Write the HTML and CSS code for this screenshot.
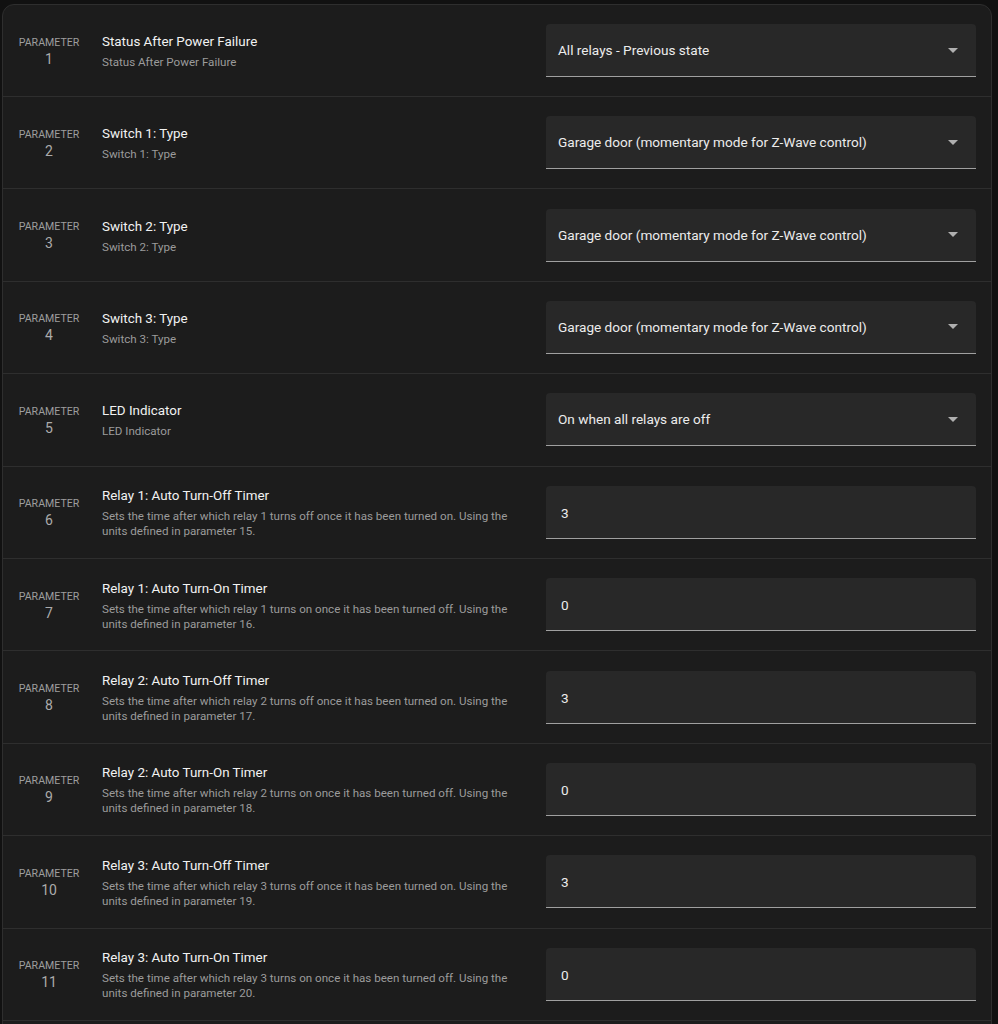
FILE: index.html
```html
<!DOCTYPE html>
<html lang="en">
<head>
    <meta charset="UTF-8">
    <title>Z-Wave Device Configuration</title>
    <link rel="stylesheet" href="styles.css">
</head>
<body>
    <div class="card">
        <div class="param-row">
            <div class="param-id"><span class="param-label">Parameter</span><span class="param-num">1</span></div>
            <div class="param-text">
                <div class="param-title">Status After Power Failure</div>
                <div class="param-desc">Status After Power Failure</div>
            </div>
            <div class="field select"><span>All relays - Previous state</span><i class="arrow"></i></div>
        </div>
        <div class="param-row">
            <div class="param-id"><span class="param-label">Parameter</span><span class="param-num">2</span></div>
            <div class="param-text">
                <div class="param-title">Switch 1: Type</div>
                <div class="param-desc">Switch 1: Type</div>
            </div>
            <div class="field select"><span>Garage door (momentary mode for Z-Wave control)</span><i class="arrow"></i></div>
        </div>
        <div class="param-row">
            <div class="param-id"><span class="param-label">Parameter</span><span class="param-num">3</span></div>
            <div class="param-text">
                <div class="param-title">Switch 2: Type</div>
                <div class="param-desc">Switch 2: Type</div>
            </div>
            <div class="field select"><span>Garage door (momentary mode for Z-Wave control)</span><i class="arrow"></i></div>
        </div>
        <div class="param-row">
            <div class="param-id"><span class="param-label">Parameter</span><span class="param-num">4</span></div>
            <div class="param-text">
                <div class="param-title">Switch 3: Type</div>
                <div class="param-desc">Switch 3: Type</div>
            </div>
            <div class="field select"><span>Garage door (momentary mode for Z-Wave control)</span><i class="arrow"></i></div>
        </div>
        <div class="param-row">
            <div class="param-id"><span class="param-label">Parameter</span><span class="param-num">5</span></div>
            <div class="param-text">
                <div class="param-title">LED Indicator</div>
                <div class="param-desc">LED Indicator</div>
            </div>
            <div class="field select"><span>On when all relays are off</span><i class="arrow"></i></div>
        </div>
        <div class="param-row">
            <div class="param-id"><span class="param-label">Parameter</span><span class="param-num">6</span></div>
            <div class="param-text">
                <div class="param-title">Relay 1: Auto Turn-Off Timer</div>
                <div class="param-desc">Sets the time after which relay 1 turns off once it has been turned on. Using the units defined in parameter 15.</div>
            </div>
            <div class="field number"><span>3</span></div>
        </div>
        <div class="param-row">
            <div class="param-id"><span class="param-label">Parameter</span><span class="param-num">7</span></div>
            <div class="param-text">
                <div class="param-title">Relay 1: Auto Turn-On Timer</div>
                <div class="param-desc">Sets the time after which relay 1 turns on once it has been turned off. Using the units defined in parameter 16.</div>
            </div>
            <div class="field number"><span>0</span></div>
        </div>
        <div class="param-row">
            <div class="param-id"><span class="param-label">Parameter</span><span class="param-num">8</span></div>
            <div class="param-text">
                <div class="param-title">Relay 2: Auto Turn-Off Timer</div>
                <div class="param-desc">Sets the time after which relay 2 turns off once it has been turned on. Using the units defined in parameter 17.</div>
            </div>
            <div class="field number"><span>3</span></div>
        </div>
        <div class="param-row">
            <div class="param-id"><span class="param-label">Parameter</span><span class="param-num">9</span></div>
            <div class="param-text">
                <div class="param-title">Relay 2: Auto Turn-On Timer</div>
                <div class="param-desc">Sets the time after which relay 2 turns on once it has been turned off. Using the units defined in parameter 18.</div>
            </div>
            <div class="field number"><span>0</span></div>
        </div>
        <div class="param-row">
            <div class="param-id"><span class="param-label">Parameter</span><span class="param-num">10</span></div>
            <div class="param-text">
                <div class="param-title">Relay 3: Auto Turn-Off Timer</div>
                <div class="param-desc">Sets the time after which relay 3 turns off once it has been turned on. Using the units defined in parameter 19.</div>
            </div>
            <div class="field number"><span>3</span></div>
        </div>
        <div class="param-row">
            <div class="param-id"><span class="param-label">Parameter</span><span class="param-num">11</span></div>
            <div class="param-text">
                <div class="param-title">Relay 3: Auto Turn-On Timer</div>
                <div class="param-desc">Sets the time after which relay 3 turns on once it has been turned off. Using the units defined in parameter 20.</div>
            </div>
            <div class="field number"><span>0</span></div>
        </div>
    </div>
</body>
</html>
```
FILE: styles.css
```css
body {
    margin: 0;
    padding: 4px 6px 0 2px;
    background-color: #111111;
    font-family: Roboto, "Noto Sans", Arial, sans-serif;
    color: #e1e1e1;
    overflow: hidden;
}

.card {
    padding-bottom: 24px;
    background-color: #1c1c1c;
    border: 1px solid #2e2e2e;
    border-radius: 12px;
}

.param-row {
    display: flex;
    align-items: center;
    box-sizing: border-box;
    height: 92.4px;
    padding: 0 15px 0 14px;
    border-bottom: 1px solid #2e2e2e;
}

.param-row:first-child {
    height: 92px;
}

.param-id {
    display: flex;
    flex-direction: column;
    align-items: center;
    width: 64px;
    flex-shrink: 0;
    padding-top: 1px;
}

.param-label {
    font-size: 10.6px;
    line-height: 15px;
    text-transform: uppercase;
    color: #9e9e9e;
}

.param-num {
    font-size: 14px;
    line-height: 18px;
    color: #ababab;
}

.param-text {
    flex: 1;
    padding: 1px 18px 0 21px;
}

.param-title {
    font-size: 13.4px;
    line-height: 20px;
    margin-bottom: 3px;
    color: #f2f2f2;
}

.param-desc {
    font-size: 11.6px;
    line-height: 15px;
    color: #9b9b9b;
}

.field {
    display: flex;
    align-items: center;
    box-sizing: border-box;
    width: 430px;
    height: 53px;
    flex-shrink: 0;
    padding: 0 12px;
    background-color: #282828;
    border-radius: 4px 4px 0 0;
    border-bottom: 1px solid #a0a0a0;
    font-size: 13.6px;
    color: #ececec;
}

.field span {
    flex: 1;
}

.field.number {
    padding-left: 15px;
    padding-top: 2px;
}

.arrow {
    width: 0;
    height: 0;
    margin-right: 6px;
    border-left: 5px solid transparent;
    border-right: 5px solid transparent;
    border-top: 5px solid #b0b0b0;
}
```
